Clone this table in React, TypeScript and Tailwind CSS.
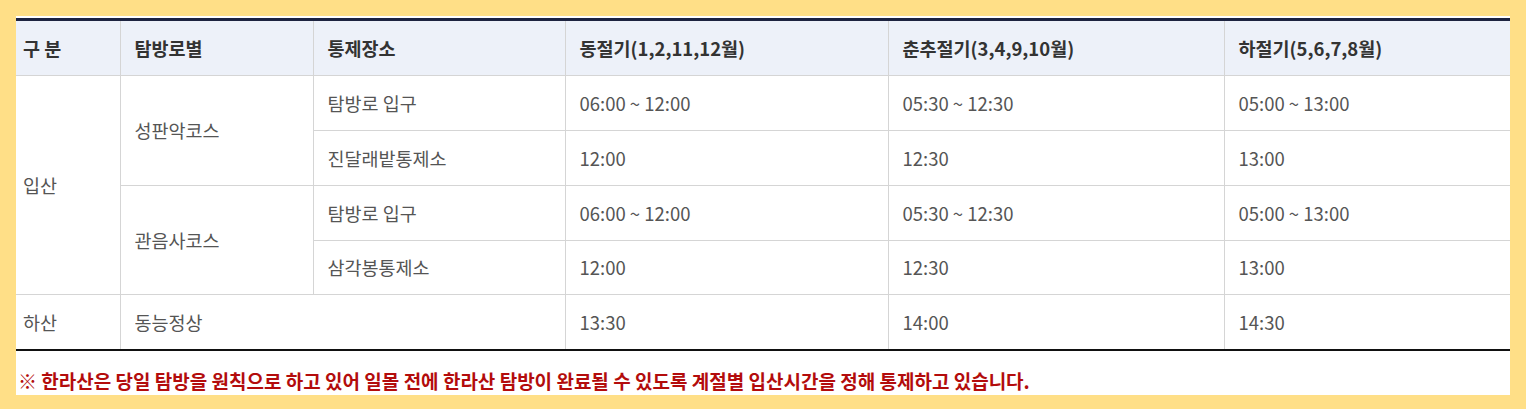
import React from "react";

const font = { fontFamily: '"Noto Sans CJK KR", "Noto Sans", sans-serif' };

const cell = "border border-[#d5d5d5] px-[14px] align-middle";

export default function App() {
  return (
    <div className="w-[1526px] h-[409px] bg-[#ffdf87] p-4 pb-[14px]" style={font}>
      <div className="bg-white h-full pt-[2px]">
        <table className="w-full border-collapse table-fixed text-[18.5px] text-[#555] leading-none">
          <colgroup>
            <col className="w-[104px]" />
            <col className="w-[193px]" />
            <col className="w-[252px]" />
            <col className="w-[323px]" />
            <col className="w-[336px]" />
            <col className="w-[286px]" />
          </colgroup>
          <thead>
            <tr className="h-[56px] bg-[#edf1f9] text-[#333] font-bold border-t-[3px] border-t-[#1d2340]">
              <th className={`${cell} border-l-0 text-left pl-[7px]`}>구 분</th>
              <th className={`${cell} text-left`}>탐방로별</th>
              <th className={`${cell} text-left`}>통제장소</th>
              <th className={`${cell} text-left`}>동절기(1,2,11,12월)</th>
              <th className={`${cell} text-left`}>춘추절기(3,4,9,10월)</th>
              <th className={`${cell} border-r-0 text-left`}>하절기(5,6,7,8월)</th>
            </tr>
          </thead>
          <tbody>
            <tr className="h-[55px]">
              <td rowSpan={4} className={`${cell} border-l-0 pl-[7px]`}>입산</td>
              <td rowSpan={2} className={cell}>성판악코스</td>
              <td className={cell}>탐방로 입구</td>
              <td className={cell}>06:00 ~ 12:00</td>
              <td className={cell}>05:30 ~ 12:30</td>
              <td className={`${cell} border-r-0`}>05:00 ~ 13:00</td>
            </tr>
            <tr className="h-[55px]">
              <td className={cell}>진달래밭통제소</td>
              <td className={cell}>12:00</td>
              <td className={cell}>12:30</td>
              <td className={`${cell} border-r-0`}>13:00</td>
            </tr>
            <tr className="h-[55px]">
              <td rowSpan={2} className={cell}>관음사코스</td>
              <td className={cell}>탐방로 입구</td>
              <td className={cell}>06:00 ~ 12:00</td>
              <td className={cell}>05:30 ~ 12:30</td>
              <td className={`${cell} border-r-0`}>05:00 ~ 13:00</td>
            </tr>
            <tr className="h-[54px]">
              <td className={cell}>삼각봉통제소</td>
              <td className={cell}>12:00</td>
              <td className={cell}>12:30</td>
              <td className={`${cell} border-r-0`}>13:00</td>
            </tr>
            <tr className="h-[55px] border-b-2 border-b-[#111]">
              <td className={`${cell} border-l-0 border-b-[#111] border-b-2 pl-[7px]`}>하산</td>
              <td colSpan={2} className={`${cell} border-b-[#111] border-b-2`}>동능정상</td>
              <td className={`${cell} border-b-[#111] border-b-2`}>13:30</td>
              <td className={`${cell} border-b-[#111] border-b-2`}>14:00</td>
              <td className={`${cell} border-r-0 border-b-[#111] border-b-2`}>14:30</td>
            </tr>
          </tbody>
        </table>
        <p className="pt-[20px] pl-[2px] text-[19px] leading-none font-bold text-[#b30c0c]">
          ※ 한라산은 당일 탐방을 원칙으로 하고 있어 일몰 전에 한라산 탐방이 완료될 수 있도록 계절별 입산시간을 정해 통제하고 있습니다.
        </p>
      </div>
    </div>
  );
}
